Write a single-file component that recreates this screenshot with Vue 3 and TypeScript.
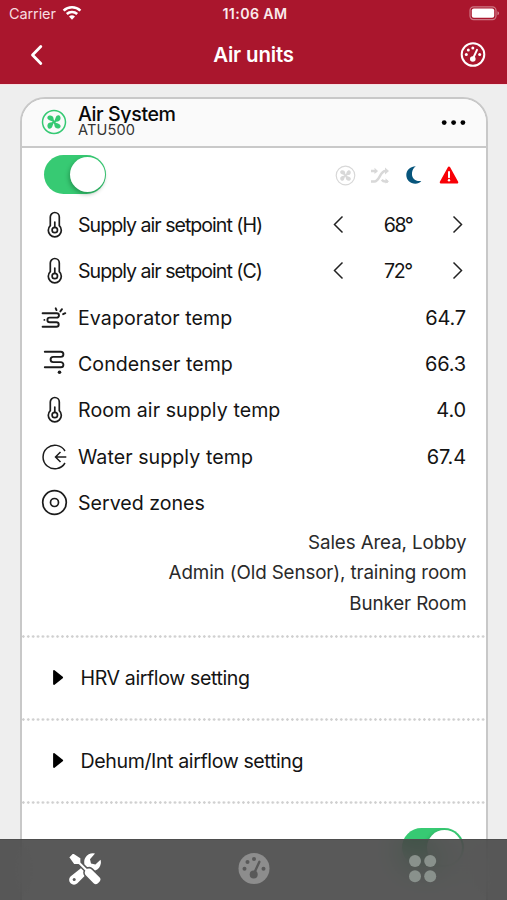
<script setup lang="ts">
interface Setpoint { label: string; value: string }
interface Reading { label: string; value: string; icon: string; cls: string }

const setpoints: Setpoint[] = [
  { label: 'Supply air setpoint (H)', value: '68°' },
  { label: 'Supply air setpoint (C)', value: '72°' },
]
const readings: Reading[] = [
  { label: 'Evaporator temp', value: '64.7', icon: 'evaporator', cls: 'wide' },
  { label: 'Condenser temp', value: '66.3', icon: 'condenser', cls: 'wide' },
  { label: 'Room air supply temp', value: '4.0', icon: 'thermo', cls: 'wide' },
  { label: 'Water supply temp', value: '67.4', icon: 'inlet', cls: 'wide' },
  { label: 'Served zones', value: '', icon: 'zone', cls: '' },
]
const zones: string[] = ['Sales Area, Lobby', 'Admin (Old Sensor), training room', 'Bunker Room']
const sections: string[] = ['HRV airflow setting', 'Dehum/Int airflow setting']
</script>

<template>
  <div class="screen">
    <svg class="defs" width="0" height="0" aria-hidden="true">
      <symbol id="thermo" viewBox="0 0 28 28">
        <g fill="none" stroke="#1c1c1c" stroke-width="1.7" stroke-linecap="round">
          <path d="M10.3 14.600V6a4.500 4.500 0 0 1 9 0v8.600a6.500 6.500 0 1 1-9 0Z" />
          <circle cx="14.8" cy="19" r="2.7" />
          <path d="M14.8 11v5.300" />
        </g>
      </symbol>
      <symbol id="evaporator" viewBox="0 0 28 28">
        <g fill="none" stroke="#1c1c1c" stroke-width="1.9" stroke-linecap="round">
          <path d="M2.6 9.3h14.2a2.1 2.1 0 0 1 0 4.3H9.7a2.3 2.3 0 0 0 0 4.6h6.7a2.3 2.3 0 0 1 0 4.6H2.6M4.4 15.9h0" />
          <path d="m15.7 4.3.8 1.8M22 5.2l-1.7 2.2M25.3 9.2l-2.2 1" />
        </g>
      </symbol>
      <symbol id="condenser" viewBox="0 0 28 28">
        <g fill="none" stroke="#1c1c1c" stroke-width="1.9" stroke-linecap="round">
          <path d="M4.8 1.7h16a2.6 2.6 0 0 1 0 5.2h-7.6a2.6 2.6 0 0 0 0 5.2h7.6a2.6 2.6 0 0 1 0 5.2H4.8" />
        </g>
        <circle cx="19.5" cy="22.3" r="1.8" fill="#1c1c1c" />
      </symbol>
      <symbol id="inlet" viewBox="0 0 28 28">
        <g fill="none" stroke="#1c1c1c" stroke-width="1.5">
          <path d="M25 8A11.8 11.8 0 1 0 25 20" />
          <path d="M26.3 14H15.8M20.5 9l-5 5 5 5" />
        </g>
      </symbol>
      <symbol id="zone" viewBox="0 0 28 28">
        <g fill="none" stroke="#1c1c1c" stroke-width="1.7">
          <circle cx="14.5" cy="13.5" r="11.8" /><circle cx="14.5" cy="13.5" r="4" />
        </g>
      </symbol>
      <symbol id="fan" viewBox="0 0 26 26">
        <circle cx="13" cy="13" r="11.5" fill="none" stroke="currentColor" stroke-width="1.5" />
        <g fill="currentColor">
          <path id="blade" d="M12.2 13.2C11.2 12 10 11.9 8.5 11.3 6 10.5 5.700 7.600 7.600 6.800c2.300-1 4.600.2 4.900 2.400.1 1 .3 2.200.9 3Z" />
          <use href="#blade" transform="rotate(90 13 13)" />
          <use href="#blade" transform="rotate(180 13 13)" />
          <use href="#blade" transform="rotate(270 13 13)" />
          <circle cx="13" cy="13" r="1.2" />
        </g>
      </symbol>
    </svg>

    <header class="top">
      <div class="status">
        <div class="carrier">
          <span class="carrier-name">Carrier</span>
          <svg width="20" height="16" viewBox="0 0 20 16">
            <g fill="none" stroke="#fff" stroke-width="2.6">
              <path d="M1.6 5.6a12.2 12.2 0 0 1 16.8 0" />
              <path d="M4.8 9a7.6 7.6 0 0 1 10.4 0" />
            </g>
            <path d="M7 11.5a4.6 4.6 0 0 1 6 0L10 14.8Z" fill="#fff" />
          </svg>
        </div>
        <span class="clock">11:06 AM</span>
        <svg class="battery" width="32" height="16" viewBox="0 0 32 16">
          <rect x="1" y="1.8" width="26" height="12.8" rx="3.6" fill="none" stroke="#fff" stroke-opacity=".42" stroke-width="1.2" />
          <rect x="2.8" y="3.6" width="22.4" height="9.2" rx="2" fill="#fff" />
          <path d="M28.5 6.2c2 .7 2 3.4 0 4.1Z" fill="#fff" fill-opacity=".5" />
        </svg>
      </div>
      <div class="nav">
        <svg class="back" width="16" height="24" viewBox="0 0 16 24">
          <path d="M12.8 3.5 4.5 12l8.3 8.5" fill="none" stroke="#fff" stroke-width="2.8" stroke-linecap="round" stroke-linejoin="round" />
        </svg>
        <h1>Air units</h1>
        <svg class="gauge" width="26" height="26" viewBox="0 0 26 26">
          <circle cx="13" cy="12.5" r="11.3" fill="none" stroke="#fff" stroke-width="2" />
          <path d="M13 16.5 17 7.8" stroke="#fff" stroke-width="2" stroke-linecap="round" />
          <g fill="#fff">
            <circle cx="12.8" cy="17" r="2.8" /><circle cx="6.3" cy="12.5" r="1.5" />
            <circle cx="8.3" cy="7.9" r="1.5" /><circle cx="12.8" cy="5.9" r="1.5" /><circle cx="19.7" cy="12.5" r="1.5" />
          </g>
        </svg>
      </div>
    </header>

    <main class="content">
      <section class="card">
        <div class="card-head">
          <svg class="fan-green" width="26" height="26"><use href="#fan" /></svg>
          <div class="names">
            <div class="name">Air System</div>
            <div class="model">ATU500</div>
          </div>
          <svg width="26" height="8" viewBox="0 0 26 8">
            <circle cx="3.2" cy="4.6" r="2.4" /><circle cx="12.6" cy="4.6" r="2.4" /><circle cx="21.9" cy="4.6" r="2.4" />
          </svg>
        </div>

        <div class="controls">
          <div class="toggle"><i></i></div>
          <div class="indicators">
            <svg class="muted" width="21" height="21" viewBox="0 0 26 26"><use href="#fan" width="26" height="26" /></svg>
            <svg class="muted" width="20" height="20" viewBox="0 0 20 20">
              <path d="M1 16.5h3.4c5.2 0 5.6-10.4 11-10.4h.6M1 5.9h2.7c1.3 0 2.1.4 2.9 1.3M11.8 14.8c.9 1.2 1.9 1.7 3.4 1.7H18" fill="none" stroke="currentColor" stroke-width="2.5" />
              <path d="M15 2.4 19 6l-4 3.6ZM15.5 13.2 19 16.5l-3.5 2ZM4.5 2.8 8 6 4.5 9Z" fill="currentColor" />
            </svg>
            <svg width="20" height="20" viewBox="0 0 20 20">
              <path d="M11.8 1.2C6.6 1.2 2.3 5 2.3 10s4 8.7 9 8.7c2.5 0 4.4-.9 6-2.7-6 .8-10-3-9.3-8.3C8.4 4.8 9.6 2.8 11.8 1.2Z" fill="#07557c" />
            </svg>
            <svg width="22" height="20" viewBox="0 0 22 20">
              <path d="M11 2.8 19 17.3H3Z" fill="#f80006" stroke="#f80006" stroke-width="2.6" stroke-linejoin="round" />
              <path d="M11 7v5.2" stroke="#fff" stroke-width="2" stroke-linecap="round" /><circle cx="11" cy="15.3" r="1.2" fill="#fff" />
            </svg>
          </div>
        </div>

        <div v-for="s in setpoints" :key="s.label" class="row">
          <svg class="icon" width="28" height="28"><use href="#thermo" /></svg>
          <span class="label tight">{{ s.label }}</span>
          <div class="stepper">
            <svg width="12" height="20" viewBox="0 0 12 20"><path d="M10.5 1.5 2.5 9.5l8 8" /></svg>
            <span>{{ s.value }}</span>
            <svg width="12" height="20" viewBox="0 0 12 20"><path d="m1.5 1.5 8 8-8 8" /></svg>
          </div>
        </div>
        <div v-for="r in readings" :key="r.label" class="row">
          <svg class="icon" width="28" height="28"><use :href="'#' + r.icon" /></svg>
          <span class="label" :class="r.cls">{{ r.label }}</span>
          <span class="value">{{ r.value }}</span>
        </div>

        <div class="zones">
          <div v-for="z in zones" :key="z">{{ z }}</div>
        </div>

        <div v-for="s in sections" :key="s" class="fold">
          <svg width="12" height="18" viewBox="0 0 12 18"><path d="M2 2 10.2 8.5 2 15Z" stroke="#000" stroke-width="1.8" stroke-linejoin="round" /></svg>
          <span>{{ s }}</span>
        </div>
        <div class="fold last"><div class="toggle"><i></i></div></div>
      </section>
    </main>

    <nav class="tabs">
      <div class="tab">
        <svg width="32" height="32" viewBox="0 0 32 32">
          <path d="M26 .5a8.700 8.700 0 0 0-10.700 9.800c.1 1.400-.2 2.200-1.200 3.200L1.500 23.500a4.700 4.700 0 0 0 6.900 6.700l11-11c1-.9 2-1.300 3.300-1.200A8.700 8.700 0 0 0 31.500 6.700l-5.100 4.800-4.400-1-1-4.300Z" fill="#fff" />
          <circle cx="5.200" cy="26.500" r="1.500" fill="#595959" />
          <path d="m-.6 4.300 4.700-4.800 8 5.300v4.500l6 5.800c1.800-.8 3.900-.4 5.300 1l7.600 7.700a3.900 3.900 0 0 1 0 5.400l-1.500 1.500a3.900 3.900 0 0 1-5.400 0l-7.600-7.600c-1.500-1.500-1.900-3.600-1-5.400l-6-5.900H4.700Z" fill="#fff" stroke="#595959" stroke-width="1.500" stroke-linejoin="round" />
        </svg>
      </div>
      <div class="tab">
        <svg width="32" height="32" viewBox="0 0 32 32">
          <circle cx="16" cy="15.5" r="15.5" fill="#8d8d8d" />
          <path d="m16 20.5 5.4-11.7" stroke="#595959" stroke-width="2.4" stroke-linecap="round" />
          <g fill="#595959">
            <circle cx="15.7" cy="21.5" r="4" /><circle cx="6.5" cy="15.7" r="2" />
            <circle cx="9.5" cy="9" r="2" /><circle cx="16" cy="6.1" r="2" /><circle cx="25.5" cy="15.7" r="2" />
          </g>
        </svg>
      </div>
      <div class="tab">
        <svg width="28" height="28" viewBox="0 0 28 28" fill="#89918c">
          <circle cx="6" cy="6" r="6" /><circle cx="21.2" cy="6" r="6" />
          <circle cx="6" cy="21.3" r="6" /><circle cx="21.2" cy="21.3" r="6" />
        </svg>
      </div>
    </nav>
  </div>
</template>

<style>
body { margin: 0; overflow: hidden; }
</style>

<style scoped>
.screen {
  width: 507px; height: 900px; overflow: hidden; position: relative;
  display: flex; flex-direction: column;
  background: #eee; color: #141414;
  font-family: Inter, "Liberation Sans", sans-serif; font-size: 19.6px;
}
.screen * { box-sizing: border-box; }
svg { display: block; flex: none; }
.defs { position: absolute; }
.top { flex: none; height: 84px; background: #aa162d; color: #fff; box-shadow: 0 1px 0 #f8dfe3; }
.status {
  height: 27px; display: grid; grid-template-columns: 1fr auto 1fr; align-items: center;
  padding: 0 6px 0 9px; font-size: 14.5px;
}
.carrier { display: flex; align-items: center; gap: 6px; color: #f7dce0; }
.carrier-name { letter-spacing: -.1px; }
.carrier svg { margin-top: -2px; }
.clock { font-weight: 600; font-size: 14.2px; letter-spacing: .4px; color: #faeaec; }
.battery { justify-self: end; margin-top: -1px; }
.nav {
  height: 55px; padding: 0 21px;
  display: grid; grid-template-columns: 1fr auto 1fr; align-items: center;
}
.back { margin-left: 7px; }
.nav h1 { margin: 0; font-size: 20.4px; font-weight: 600; letter-spacing: -.15px; }
.gauge { justify-self: end; }

.content { flex: 1; padding: 12.5px 19px 0 20px; }
.card {
  height: 900px; background: #fff; border: 2px solid #c8c8c8;
  border-radius: 25px; overflow: hidden;
}
.card-head {
  height: 49px; display: flex; align-items: center; padding: 0 19px 0 19px;
  background: #fafafa; border-bottom: 2px solid #c9c9c9;
}
.fan-green { color: #35c973; margin-top: -1px; }
.names { flex: 1; padding-left: 11px; align-self: flex-start; padding-top: 4px; }
.name { height: 20px; overflow: hidden; font-size: 19.6px; line-height: 23px; font-weight: 500; color: #090909; letter-spacing: -.4px; }
.model { font-size: 14.6px; line-height: 15px; color: #333; letter-spacing: .1px; }
.controls { height: 54.3px; display: flex; justify-content: space-between; align-items: center; padding: 0 26px 0 22px; }
.toggle { width: 62px; height: 39px; border-radius: 20px; background: #37ca73; padding: 2px; }
.toggle i {
  display: block; width: 35px; height: 35px; margin-left: 23.5px; border-radius: 50%;
  background: #fff; box-shadow: -1px 2px 4px rgba(0, 50, 20, .35);
}
.indicators { display: flex; align-items: center; gap: 14px; padding-top: 1px; }
.muted { color: #d8d8d8; }

.row { height: 46.35px; display: flex; align-items: center; padding: 0 20px 0 18px; }
.icon { margin-right: 10px; }
.label { flex: 1; white-space: nowrap; }
.wide { letter-spacing: .06px; }
.tight { letter-spacing: -1px; }
.value { font-size: 20px; letter-spacing: -.15px; }
.stepper { display: flex; align-items: center; justify-content: space-between; width: 132px; margin-right: 2px; letter-spacing: -1.4px; }
.stepper path { fill: none; stroke: #222; stroke-width: 1.5; }

.zones { padding: 1.5px 19.5px 0 0; height: 108.8px; text-align: right; font-size: 18.8px; line-height: 30.6px; color: #2a2a2a; letter-spacing: -.12px; }
.fold {
  height: 83.2px; display: flex; align-items: center; gap: 16.5px; padding: 3px 20px 0 30px;
  letter-spacing: -.4px;
  background: radial-gradient(circle at 1.4px 1.4px, #cfcfcf 1px, transparent 1.5px) 0 0 / 4.9px 2.8px repeat-x;
}
.last { justify-content: flex-end; align-items: flex-start; padding: 26.5px 22.5px 0 0; }

.tabs {
  position: absolute; left: 0; right: 0; bottom: 0; height: 61.5px;
  display: grid; grid-template-columns: repeat(3, 1fr);
  background: rgba(62, 62, 62, .86); backdrop-filter: blur(16px); border-top: 1px solid #4e4e4e;
}
.tab { display: flex; justify-content: center; padding-top: 13.5px; }
.tab:last-child { padding-top: 15.5px; }
</style>
